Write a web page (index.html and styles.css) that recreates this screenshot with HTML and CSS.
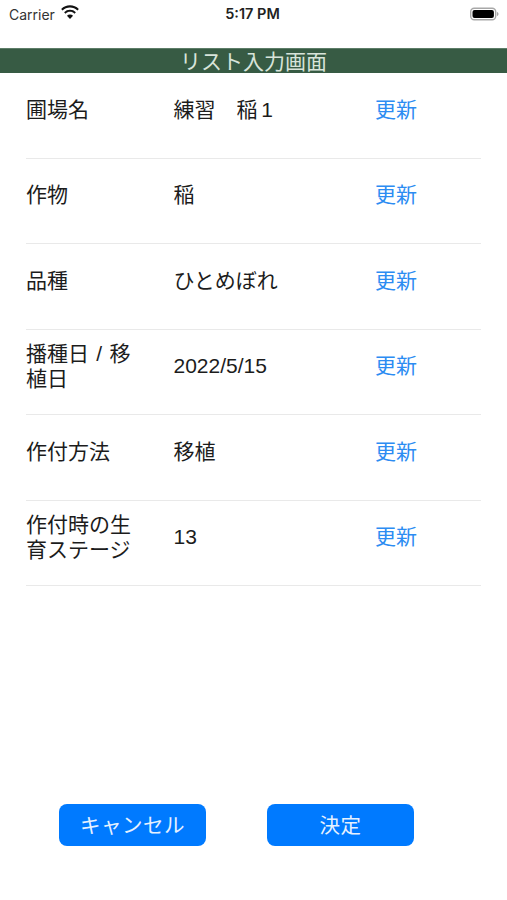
FILE: index.html
```html
<!DOCTYPE html>
<html lang="ja">
<head>
<meta charset="utf-8">
<title>リスト入力画面</title>
<link rel="stylesheet" href="styles.css">
</head>
<body>
<div class="screen">
  <div class="status">
    <div class="status-left">
      <span class="carrier">Carrier</span>
      <svg class="wifi" width="20" height="15" viewBox="0 0 19 14"><path d="M9.5 2.2c2.7 0 5.2 1 7.1 2.8l1.3-1.4A12.2 12.2 0 0 0 9.5.2 12.2 12.2 0 0 0 1.100 3.600L2.400 5c1.900-1.800 4.400-2.800 7.100-2.800z" fill="#111"/><path d="M9.500 6.400c1.600 0 3.100.6 4.200 1.700l1.400-1.400a8 8 0 0 0-11.200 0l1.400 1.400c1.100-1.100 2.600-1.700 4.200-1.700z" fill="#111"/><path d="M9.500 13.200l2.900-3a4 4 0 0 0-5.800 0z" fill="#111"/></svg>
    </div>
    <div class="time">5:17 PM</div>
    <div class="status-right">
      <svg width="29" height="14" viewBox="0 0 29 14"><rect x="0.700" y="1.200" width="25" height="11.600" rx="3.500" fill="none" stroke="#a8a8a8" stroke-width="1.400"/><rect x="2.500" y="3" width="21.400" height="8" rx="2" fill="#000"/><path d="M27 5v4c.9-.3 1.500-1.100 1.500-2s-.6-1.700-1.500-2z" fill="#a8a8a8"/></svg>
    </div>
  </div>
  <header class="title-bar">リスト入力画面</header>
  <main class="list">
    <div class="row"><div class="label">圃場名</div><div class="value">練習　稲 1</div><a class="update">更新</a></div>
    <div class="row"><div class="label">作物</div><div class="value">稲</div><a class="update">更新</a></div>
    <div class="row"><div class="label">品種</div><div class="value">ひとめぼれ</div><a class="update">更新</a></div>
    <div class="row"><div class="label">播種日 / 移植日</div><div class="value">2022/5/15</div><a class="update">更新</a></div>
    <div class="row"><div class="label">作付方法</div><div class="value">移植</div><a class="update">更新</a></div>
    <div class="row"><div class="label">作付時の生育ステージ</div><div class="value">13</div><a class="update">更新</a></div>
  </main>
  <footer class="actions">
    <button class="btn">キャンセル</button>
    <button class="btn">決定</button>
  </footer>
</div>
</body>
</html>
```

FILE: styles.css
```css
* { box-sizing: border-box; }
html, body { margin: 0; padding: 0; background: #fff; }
body {
  font-family: Inter, "Liberation Sans", "Noto Sans CJK JP", sans-serif;
  color: #111;
}
.screen { width: 507px; height: 900px; overflow: hidden; display: flex; flex-direction: column; }
.status {
  height: 48px;
  display: grid;
  grid-template-columns: 1fr auto 1fr;
  align-items: start;
  padding: 5px 8px 0 9px;
}
.status-left { display: flex; align-items: center; gap: 5px; height: 18px; }
.carrier { font-size: 14px; color: #333; }
.wifi { margin-top: -3px; }
.time { font-size: 14.500px; font-weight: 600; height: 18px; line-height: 18px; margin-right: 3px; color: #222; }
.status-right { display: flex; justify-content: flex-end; height: 18px; align-items: center; }
.title-bar {
  height: 25px;
  background: #375b44;
  color: #d8e4da;
  font-size: 21px;
  line-height: 26px;
  text-align: center;
  border-top: 1px solid #5d7d68;
}
.list { padding: 0.200px 26px 0; }
.row {
  height: 85.500px;
  display: grid;
  grid-template-columns: 147.500px 201.500px 1fr;
  align-items: center;
  border-bottom: 1px solid #e9e9e9;
  padding-bottom: 12px;
  font-family: "Liberation Sans", "Noto Sans CJK JP", sans-serif;
}
.label { font-size: 21px; line-height: 25px; width: 108px; color: #1c1c1c; word-spacing: 1.500px; }
.value { font-size: 21px; line-height: 25px; color: #1c1c1c; word-spacing: -2px; }
.update { font-size: 21px; color: #2c8cf2; line-height: 25px; }
.actions {
  margin-top: auto;
  margin-bottom: 54px;
  padding-left: 59px;
  display: flex;
  gap: 61px;
}
.btn {
  width: 147px;
  height: 42px;
  border: 0;
  border-radius: 8px;
  background: #007aff;
  color: #e6f1ff;
  font: inherit;
  font-size: 20.500px;
  letter-spacing: 0.500px;
  padding: 0 0 2px;
}
```
